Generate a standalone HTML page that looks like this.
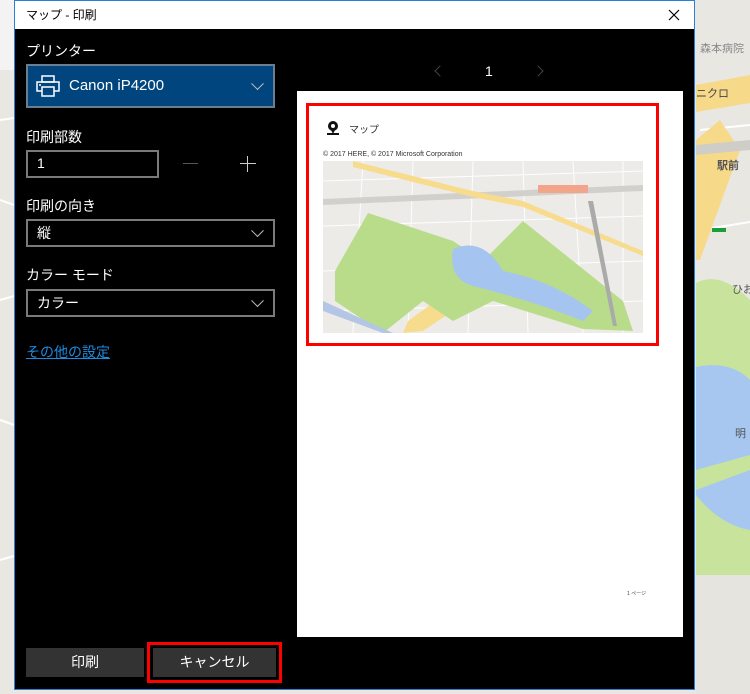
<!DOCTYPE html>
<html><head><meta charset="utf-8"><style>
*{margin:0;padding:0;box-sizing:border-box}
body{width:750px;height:694px;overflow:hidden;position:relative;background:#ecebe7;font-family:"Liberation Sans","Noto Sans CJK JP",sans-serif}
.abs{position:absolute}
.dlg{left:14px;top:0;width:681px;height:690px;border:1px solid #2b7fd8;background:#000}
.title{left:0;top:0;width:679px;height:28px;background:#fff;color:#000;font-size:12px;line-height:28px;padding-left:11px}
.lbl{color:#fff;font-size:14px}
.dd{border:2px solid #7a7a7a;color:#fff;font-size:14px}
.chev{position:absolute;right:11px;top:50%;width:9px;height:9px;border-right:1px solid #bbb;border-bottom:1px solid #bbb;transform:translateY(-75%) rotate(45deg)}
.btn{background:#333;color:#fff;font-size:14px;text-align:center;line-height:29px}
</style></head><body>
<svg class="abs" style="left:0;top:0" width="750" height="694">
<rect width="750" height="694" fill="#e9e7e2"/>
<rect x="0" y="0" width="14" height="70" fill="#f3f3f3"/>
<g stroke="#fff" stroke-width="2" fill="none">
<path d="M0 120 L14 118 M0 200 L14 205 M0 300 L14 296 M0 420 L14 425 M0 560 L14 556"/>
<path d="M700 130 L750 125 M700 230 L750 222 M700 600 L750 590 M720 560 L740 694"/>
</g>
<path d="M696 85 L750 75 L750 103 L696 112Z" fill="#f7d98a"/>
<path d="M696 140 L720 120 L740 150 L700 260 L696 260Z" fill="#f7d98a"/>
<path d="M696 145 L750 140 L750 150 L696 155Z" fill="#cfcdc8"/>
<path d="M696 283 Q720 270 750 300 L750 575 L696 575Z" fill="#c8e39c"/>
<path d="M696 367 Q730 360 750 380 L750 530 Q720 525 696 495Z" fill="#a7c7f0"/>
<path d="M696 470 L750 455 L750 470 L696 490Z" fill="#c8e39c"/>
<rect x="696" y="575" width="54" height="119" fill="#e6e4df"/>
<text x="700" y="52" font-size="11" fill="#8a8a8a" font-family="Noto Sans CJK JP">森本病院</text>
<text x="696" y="97" font-size="11" fill="#444" font-family="Noto Sans CJK JP">ニクロ</text>
<text x="717" y="169" font-size="11" fill="#555" font-weight="bold" font-family="Noto Sans CJK JP">駅前</text>
<rect x="712" y="228" width="14" height="4" fill="#1a9e3a"/>
<text x="732" y="293" font-size="11" fill="#555" font-family="Noto Sans CJK JP">ひお</text>
<text x="735" y="437" font-size="11" fill="#555" font-family="Noto Sans CJK JP">明</text>
</svg>
<div class="abs dlg">
 <div class="abs title">マップ - 印刷</div>
 <svg class="abs" style="left:653px;top:8px" width="12" height="12"><path d="M1 1L11 11M11 1L1 11" stroke="#000" stroke-width="1.2"/></svg>
 <div class="abs lbl" style="left:11px;top:40px">プリンター</div>
 <div class="abs" style="left:11px;top:63px;width:249px;height:44px;background:#00457e;border:2px solid #6b7e90">
  <svg class="abs" style="left:8px;top:9px" width="24" height="22" viewBox="0 0 24 22" fill="none" stroke="#fff" stroke-width="1.5"><rect x="6" y="1" width="12" height="6"/><rect x="1" y="7" width="22" height="9"/><rect x="6" y="12" width="12" height="9" fill="#00457e"/><line x1="3" y1="10" x2="5" y2="10"/></svg>
  <div class="abs" style="left:41px;top:11px;color:#fff;font-size:15px">Canon iP4200</div>
  <div class="chev"></div>
 </div>
 <div class="abs lbl" style="left:11px;top:126px">印刷部数</div>
 <div class="abs dd" style="left:11px;top:149px;width:133px;height:28px;padding:3px 9px">1</div>
 <div class="abs" style="left:168px;top:162px;width:15px;height:1px;background:#555"></div>
 <div class="abs" style="left:225px;top:162px;width:16px;height:1px;background:#ccc"></div>
 <div class="abs" style="left:232px;top:155px;width:1px;height:16px;background:#ccc"></div>
 <div class="abs lbl" style="left:11px;top:195px">印刷の向き</div>
 <div class="abs dd" style="left:11px;top:218px;width:249px;height:28px;padding:2px 9px">縦<div class="chev"></div></div>
 <div class="abs lbl" style="left:11px;top:264px">カラー モード</div>
 <div class="abs dd" style="left:11px;top:288px;width:249px;height:28px;padding:2px 9px">カラー<div class="chev"></div></div>
 <div class="abs" style="left:11px;top:341px;color:#1a8ce0;font-size:14px;text-decoration:underline">その他の設定</div>
 <div class="abs" style="left:421px;top:66px;width:8px;height:8px;border-left:1px solid #444;border-bottom:1px solid #444;transform:rotate(45deg)"></div>
 <div class="abs" style="left:470px;top:62px;color:#fff;font-size:14px">1</div>
 <div class="abs" style="left:519px;top:66px;width:8px;height:8px;border-right:1px solid #444;border-top:1px solid #444;transform:rotate(45deg)"></div>
 <div class="abs" style="left:282px;top:90px;width:386px;height:546px;background:#fff">
  <svg class="abs" style="left:29px;top:29px" width="14" height="16" viewBox="0 0 14 16"><circle cx="7" cy="6" r="5" fill="#111"/><circle cx="7" cy="6" r="2" fill="#fff"/><rect x="1" y="13" width="12" height="2" fill="#111"/><path d="M5 10 L7 14 L9 10Z" fill="#111"/></svg>
  <div class="abs" style="left:52px;top:30px;font-size:10px;color:#333">マップ</div>
  <div class="abs" style="left:26px;top:60px;font-size:7px;color:#333">© 2017 HERE, © 2017 Microsoft Corporation</div>
  <svg class="abs" style="left:26px;top:70px" width="320" height="172">
   <rect width="320" height="172" fill="#ecebe8"/>
   <g stroke="#fff" stroke-width="1" fill="none" opacity=".9">
    <path d="M0 20 L320 10 M0 65 L320 55 M0 110 L320 100 M0 150 L320 140 M40 0 L30 172 M90 0 L85 172 M150 0 L145 172 M200 0 L205 172 M250 0 L260 172 M300 0 L300 172"/>
   </g>
   <path d="M0 38 L320 24 L320 30 L0 44Z" fill="#d2d0cc"/>
   <path d="M30 0 L150 30 L200 40 L320 90 L320 95 L200 46 L150 36 L30 6Z" fill="#f8dc8e"/>
   <path d="M130 150 L100 170 L80 172 L85 160 L140 120 L210 80 L215 86 L145 128Z" fill="#f8dc8e"/>
   <path d="M12 110 L45 52 L130 80 L160 100 L200 60 L300 140 L310 170 L260 168 L170 140 L130 160 L100 140 L60 172 L12 140Z" fill="#b9dc8a"/>
   <path d="M130 88 Q160 75 180 110 Q230 120 270 150 L260 160 Q210 140 150 125 Q125 118 130 88Z" fill="#a5c4ef"/>
   <path d="M0 140 L70 172 L60 172 L0 150Z" fill="#b3c6e3"/>
   <rect x="215" y="24" width="50" height="8" fill="#f3a58b"/>
   <path d="M265 40 L290 165 L294 165 L270 40Z" fill="#aaa"/>
  </svg>
  <div class="abs" style="left:330px;top:499px;font-size:5px;color:#444">1 ページ</div>
 </div>
 <div class="abs" style="left:291px;top:102px;width:353px;height:243px;border:3px solid #f00"></div>
 <div class="abs btn" style="left:11px;top:647px;width:118px;height:29px">印刷</div>
 <div class="abs btn" style="left:138px;top:647px;width:123px;height:29px">キャンセル</div>
 <div class="abs" style="left:132px;top:641px;width:135px;height:41px;border:3px solid #f00"></div>
</div>
</body></html>
